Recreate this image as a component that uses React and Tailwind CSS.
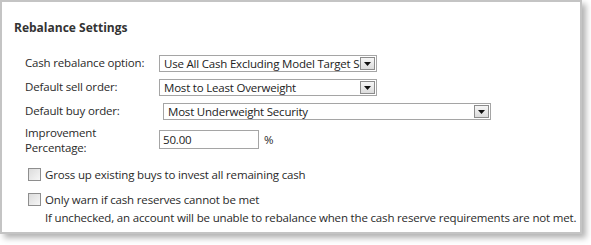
import { useState } from "react";

const font = { fontFamily: '"Open Sans", "Noto Sans", sans-serif' };

function Select({ value, className }) {
    return (
        <div className={`flex items-center h-[17px] border border-[#a5a5a5] bg-white ${className}`}>
            <span className="flex-1 min-w-0 pl-[4px] text-[11.5px] tracking-[-0.2px] leading-[15px] text-[#222] whitespace-nowrap overflow-hidden">
                {value}
            </span>
            <span className="w-[15px] h-[13px] mr-[1px] shrink-0 flex items-end justify-center pb-[3px] border border-[#8c8c8c] bg-gradient-to-b from-[#f6f6f6] to-[#dcdcdc]">
                <svg width="7" height="4" viewBox="0 0 7 4">
                    <path d="M0 0h7L3.5 4z" fill="#111" />
                </svg>
            </span>
        </div>
    );
}

function Checkbox({ checked, onChange }) {
    return (
        <button
            onClick={onChange}
            className="w-[13px] h-[13px] shrink-0 border border-[#8e8e8e] bg-gradient-to-br from-[#dcdcdc] to-[#f6f6f6] p-[1px]"
        >
            {checked && <span className="block w-full h-full bg-[#333]" />}
        </button>
    );
}

export default function App() {
    const [gross, setGross] = useState(false);
    const [warn, setWarn] = useState(false);

    return (
        <div className="w-[591px] h-[245px] bg-white" style={font}>
            <div className="w-[582px] h-[234px] border-2 border-[#c4c4c4] bg-white shadow-[4px_4px_6px_rgba(0,0,0,0.3)] text-[11.5px] tracking-[-0.17px] text-[#2a2a2a]">

                {/* TITLE */}
                <h1 className="pl-[12px] pt-[18px] font-bold text-[12px] tracking-normal text-[#333] leading-[16px]">
                    Rebalance Settings
                </h1>

                <div className="pl-[23px] pt-[15px]">
                    {/* SELECT ROWS */}
                    <div className="flex items-center h-[24px]">
                        <label className="w-[134px]">Cash rebalance option:</label>
                        <Select value="Use All Cash Excluding Model Target Security" className="w-[218px]" />
                    </div>
                    <div className="flex items-center h-[24px]">
                        <label className="w-[134px]">Default sell order:</label>
                        <Select value="Most to Least Overweight" className="w-[218px]" />
                    </div>
                    <div className="flex items-center h-[24px]">
                        <label className="w-[138px]">Default buy order:</label>
                        <Select value="Most Underweight Security" className="w-[328px]" />
                    </div>

                    {/* IMPROVEMENT */}
                    <div className="flex items-center mt-[2px]">
                        <label className="w-[134px] leading-[15px]">
                            Improvement<br />Percentage:
                        </label>
                        <input
                            defaultValue="50.00"
                            className="w-[100px] h-[19px] -mt-[2px] border border-[#a5a5a5] px-[3px] text-[11.5px] text-[#222] outline-none"
                        />
                        <span className="ml-[5px]">%</span>
                    </div>

                    {/* CHECKBOXES */}
                    <div className="flex items-center gap-[4px] mt-[11px] pl-[3px]">
                        <Checkbox checked={gross} onChange={() => setGross(!gross)} />
                        <span>Gross up existing buys to invest all remaining cash</span>
                    </div>
                    <div className="flex items-center gap-[4px] mt-[8px] pl-[3px]">
                        <Checkbox checked={warn} onChange={() => setWarn(!warn)} />
                        <span>Only warn if cash reserves cannot be met</span>
                    </div>
                    <p className="pl-[20px] mt-[1px] whitespace-nowrap leading-[15px]">
                        If unchecked, an account will be unable to rebalance when the cash reserve requirements are not met.
                    </p>
                </div>
            </div>
        </div>
    );
}
